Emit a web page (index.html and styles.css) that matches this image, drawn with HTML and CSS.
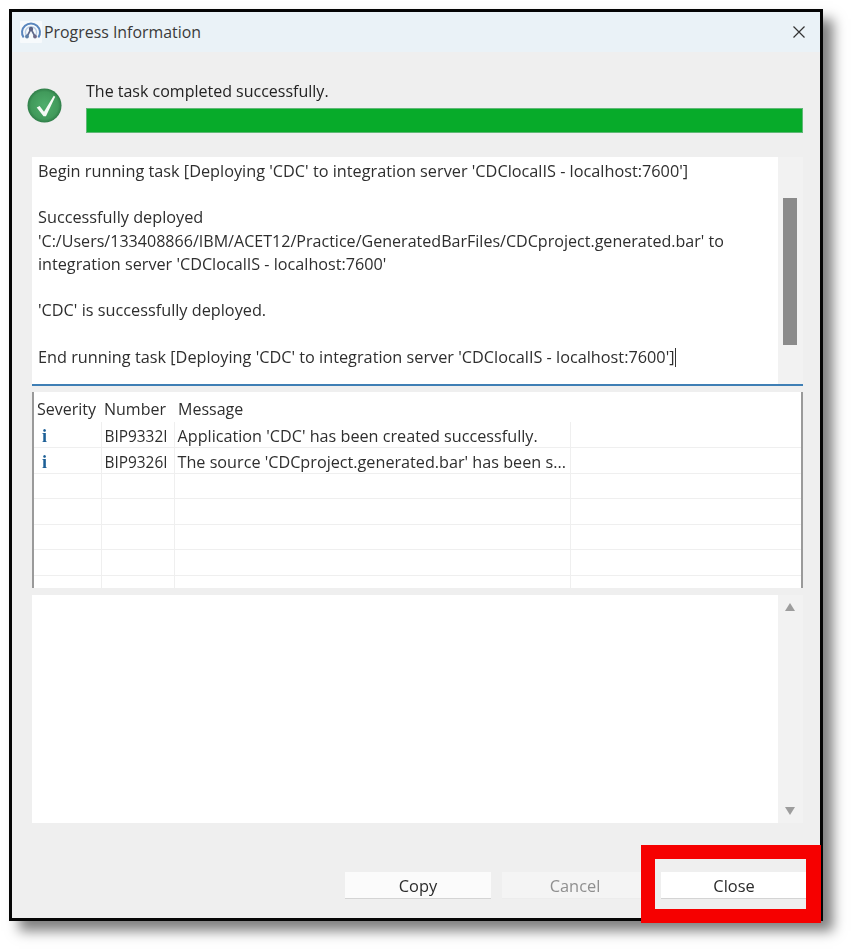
FILE: index.html
```html
<!DOCTYPE html>
<html lang="en">
<head>
<meta charset="utf-8">
<title>Progress Information</title>
<link rel="stylesheet" href="styles.css">
</head>
<body>
<div class="window">
  <header class="titlebar">
    <div class="title-left">
      <svg class="app-icon" viewBox="0 0 22 22" width="22" height="22">
        <rect width="22" height="22" rx="1" fill="#f7fafc"/>
        <path d="M3.6 16.5 A9 9 0 1 1 18.4 16.5" fill="none" stroke="#5a86bd" stroke-width="2"/>
        <path d="M6.8 15 A5.6 5.6 0 1 1 15.2 15" fill="none" stroke="#b9cde4" stroke-width="1.4"/>
        <path d="M11 8 L7 15.5 M11 8 L15 15.5" fill="none" stroke="#5f6a8c" stroke-width="1.6"/>
        <circle cx="11" cy="8" r="2.2" fill="#5c6284"/>
        <circle cx="7" cy="15.5" r="1.9" fill="#5c7fa8"/>
        <circle cx="15" cy="15.5" r="1.9" fill="#6e6a88"/>
      </svg>
      <span class="title-text">Progress Information</span>
    </div>
    <svg class="close-x" viewBox="0 0 12 12" width="12" height="12">
      <path d="M0.5 0.5 L11.5 11.5 M11.5 0.5 L0.5 11.5" stroke="#333" stroke-width="1.2" fill="none"/>
    </svg>
  </header>

  <section class="status">
    <svg class="ok-icon" viewBox="0 0 36 36" width="35" height="35">
      <defs>
        <radialGradient id="okfill" cx="50%" cy="50%" r="50%">
          <stop offset="0%" stop-color="#4fae6c"/>
          <stop offset="80%" stop-color="#419a5b"/>
          <stop offset="100%" stop-color="#2f7d48"/>
        </radialGradient>
      </defs>
      <circle cx="18" cy="18" r="17.5" fill="url(#okfill)"/>
      <path d="M10 20 L13 18.5 L17.5 24.5 L27.5 8 L29 9 L19.5 29 L17 29 Z" fill="#f4faf5"/>
    </svg>
    <div class="status-main">
      <div class="status-text">The task completed successfully.</div>
      <div class="bar"></div>
    </div>
  </section>

  <section class="log">
    <div class="log-text">
      <p>Begin running task [Deploying 'CDC' to integration server 'CDClocalIS - localhost:7600']</p>
      <p>Successfully deployed<br><span class="path">'C:/Users/133408866/IBM/ACET12/Practice/GeneratedBarFiles/CDCproject.generated.bar' to</span><br><span class="path-end">integration server 'CDClocalIS - localhost:7600'</span></p>
      <p>'CDC' is successfully deployed.</p>
      <p>End running task [Deploying 'CDC' to integration server 'CDClocalIS - localhost:7600']<span class="caret"></span></p>
    </div>
    <div class="vscroll"><div class="thumb"></div></div>
  </section>

  <section class="table-wrap">
    <table class="msgs">
      <thead>
        <tr><th class="c1">Severity</th><th class="c2">Number</th><th class="c3">Message</th><th></th></tr>
      </thead>
      <tbody>
        <tr><td class="sev"><span class="info">i</span></td><td class="num">BIP9332I</td><td class="msg">Application 'CDC' has been created successfully.</td><td></td></tr>
        <tr><td class="sev"><span class="info">i</span></td><td class="num">BIP9326I</td><td class="msg">The source 'CDCproject.generated.bar' has been s...</td><td></td></tr>
        <tr><td></td><td></td><td></td><td></td></tr>
        <tr><td></td><td></td><td></td><td></td></tr>
        <tr><td></td><td></td><td></td><td></td></tr>
        <tr><td></td><td></td><td></td><td></td></tr>
        <tr class="short"><td></td><td></td><td></td><td></td></tr>
      </tbody>
    </table>
  </section>

  <section class="detail">
    <div class="detail-text"></div>
    <div class="arrows">
      <span class="arrow-up"></span>
      <span class="arrow-down"></span>
    </div>
  </section>

  <footer class="buttons">
    <button class="btn" type="button">Copy</button>
    <button class="btn disabled" type="button">Cancel</button>
    <button class="btn last" type="button">Close</button>
  </footer>

  <div class="highlight"></div>
</div>
</body>
</html>
```

FILE: styles.css
```css
* { box-sizing: border-box; }
html, body { margin: 0; padding: 0; background: #fff; }
body {
  width: 852px;
  height: 952px;
  padding: 9px 0 0 9px;
  font-family: "Open Sans", "Noto Sans", sans-serif;
  color: #2b2b2b;
  overflow: hidden;
}
.window {
  position: relative;
  width: 814px;
  height: 912px;
  border: 3px solid #050505;
  background: #efefef;
  box-shadow: 10px 10px 12px rgba(0, 0, 0, 0.5);
  display: flex;
  flex-direction: column;
  filter: blur(0.35px);
}
.titlebar {
  height: 40px;
  background: #eaf2f7;
  display: flex;
  align-items: center;
  justify-content: space-between;
  padding: 0 15px 0 8px;
  flex: none;
}
.title-left { display: flex; align-items: center; gap: 2px; }
.title-text { font-size: 15.9px; color: #3a3a3a; }
.status {
  display: flex;
  padding: 31px 17px 0 15px;
  gap: 24px;
  flex: none;
}
.ok-icon { margin-top: 5px; flex: none; }
.status-main { flex: 1; }
.status-text { font-size: 16px; line-height: 31px; height: 32px; margin-top: -7px; color: #222; }
.bar {
  height: 25px;
  background: #07ab2a;
  border: 1px solid #5fb876;
}
.log {
  margin: 24px 17px 0 20px;
  height: 229px;
  display: flex;
  border-bottom: 2px solid #3f7fb5;
  flex: none;
}
.log-text {
  flex: 1;
  background: #fff;
  padding: 3px 6px 0;
  font-size: 16.28px;
  line-height: 23.2px;
  color: #2e2e2e;
  white-space: nowrap;
}
.log-text p { margin: 0 0 23.2px; }
.path { font-size: 16.07px; }
.path-end { font-size: 16.2px; }
.caret { display: inline-block; width: 1px; height: 19px; background: #333; vertical-align: -4px; }
.vscroll { width: 25px; background: #f2f2f2; padding-top: 41px; padding-left: 5px; }
.thumb { width: 14px; height: 147px; background: #8b8b8b; }
.table-wrap {
  margin: 6px 17px 0 20px;
  height: 196px;
  background: #fff;
  border-left: 2px solid #9a9a9a;
  border-right: 2px solid #9a9a9a;
  flex: none;
  overflow: hidden;
}
.msgs {
  width: 100%;
  border-collapse: collapse;
  table-layout: fixed;
  font-size: 16px;
  color: #2e2e2e;
}
.msgs th {
  height: 30px;
  font-weight: 400;
  text-align: left;
  padding: 4px 0 0 3px;
  white-space: nowrap;
}
.msgs .c1 { width: 67px; }
.msgs .c2 { width: 73px; }
.msgs .c3 { width: 396px; padding-left: 4px; }
.msgs td {
  height: 25.4px;
  padding: 3px 0 0 3px;
  border-right: 1px solid #efefef;
  border-bottom: 1px solid #efefef;
  white-space: nowrap;
  overflow: hidden;
  font-size: 16.2px;
}
.msgs td:last-child { border-right: 0; }
.msgs .num { font-size: 15.4px; }
.msgs .msg { padding-left: 3px; }
.msgs .short td { height: 15px; border-bottom: 0; }
.msgs .sev { padding-left: 8px; }
.info {
  font-family: "Liberation Serif", serif;
  font-weight: 700;
  font-size: 18px;
  color: #1c5f96;
}
.detail {
  margin: 7px 17px 0 20px;
  height: 228px;
  display: flex;
  flex: none;
}
.detail-text { flex: 1; background: #fff; }
.arrows {
  width: 25px;
  background: #f2f2f2;
  display: flex;
  flex-direction: column;
  justify-content: space-between;
  align-items: center;
  padding: 8px 2px 8px 0;
}
.arrow-up, .arrow-down {
  width: 0;
  height: 0;
  border-left: 5px solid transparent;
  border-right: 5px solid transparent;
}
.arrow-up { border-bottom: 8px solid #9d9d9d; }
.arrow-down { border-top: 8px solid #9d9d9d; }
.buttons {
  display: flex;
  padding: 49px 0 0 333px;
  flex: none;
}
.btn {
  width: 146px;
  height: 27px;
  border: 0;
  border-bottom: 1px solid #d4d4d4;
  background: #fbfbfb;
  font-family: inherit;
  font-size: 16.4px;
  color: #2b2b2b;
  padding: 0;
}
.btn.disabled { margin-left: 11px; background: #f4f4f4; color: #8f8f8f; border-bottom-color: #ececec; }
.btn.last { margin-left: 13px; background: #fff; }
.highlight {
  position: absolute;
  left: 629px;
  top: 833px;
  width: 180px;
  height: 78px;
  border: 14px solid #f60000;
  border-right-width: 15px;
}
```
